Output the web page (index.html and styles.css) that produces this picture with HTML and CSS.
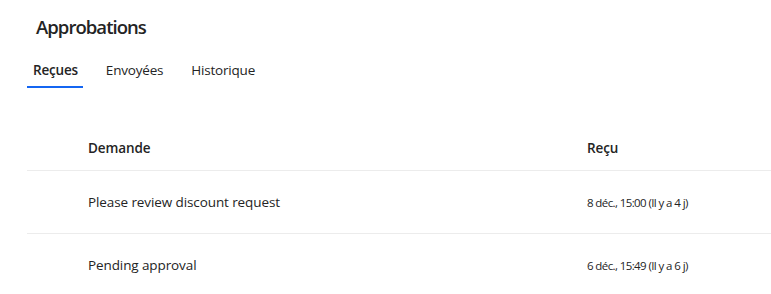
FILE: index.html
```html
<!DOCTYPE html>
<html lang="fr">
<head>
<meta charset="utf-8">
<link rel="stylesheet" href="styles.css">
</head>
<body>
<div class="page">
  <h1 class="title">Approbations</h1>
  <nav class="tabs">
    <div class="tab active">Reçues</div>
    <div class="tab">Envoyées</div>
    <div class="tab">Historique</div>
  </nav>
  <div class="table">
    <div class="row head">
      <div class="cell"></div>
      <div class="cell">Demande</div>
      <div class="cell">Reçu</div>
    </div>
    <div class="row">
      <div class="cell"></div>
      <div class="cell">Please review discount request</div>
      <div class="cell date">8 déc., 15:00 (Il y a 4 j)</div>
    </div>
    <div class="row">
      <div class="cell"></div>
      <div class="cell">Pending approval</div>
      <div class="cell date">6 déc., 15:49 (Il y a 6 j)</div>
    </div>
  </div>
</div>
</body>
</html>
```
FILE: styles.css
```css
html, body {
  margin: 0;
  padding: 0;
  background: #ffffff;
}
body {
  font-family: "Open Sans", "Noto Sans", sans-serif;
  color: #242424;
  overflow: hidden;
}
.page {
  padding: 0 0 0 27px;
}
.title {
  margin: 0;
  padding: 13px 0 0 9px;
  font-size: 18.5px;
  font-weight: 600;
  line-height: 28px;
  letter-spacing: -0.95px;
}
.tabs {
  display: flex;
  margin-top: 14px;
}
.tab {
  font-size: 13.5px;
  line-height: 20px;
  padding: 5px 5px 6px 6px;
  margin-right: 17px;
  border-bottom: 2px solid transparent;
  letter-spacing: -0.2px;
}
.tab.active {
  border-bottom-color: #1466f2;
  font-weight: 600;
}
.table {
  margin-top: 38px;
}
.row {
  display: grid;
  grid-template-columns: 61px 499px 1fr;
  align-items: center;
  height: 62px;
  border-bottom: 1px solid #ececec;
  font-size: 13.5px;
  letter-spacing: -0.1px;
}
.row.head {
  height: 44px;
  font-weight: 600;
}
.date {
  font-size: 11.5px;
  letter-spacing: -0.6px;
}
```
